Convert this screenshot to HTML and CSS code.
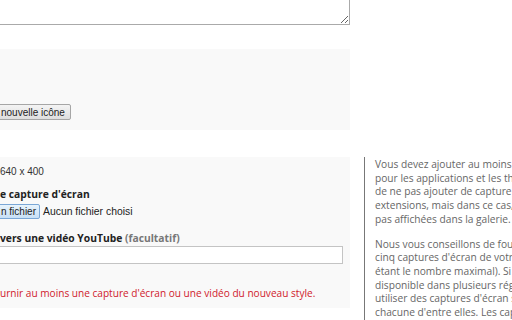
FILE: index.html
```html
<!DOCTYPE html>
<html lang="fr">
<head>
    <meta charset="UTF-8">
    <title>Ressources graphiques</title>
    <link rel="stylesheet" href="styles.css">
</head>
<body>
    <div class="form-row">
        <textarea class="desc"></textarea>
    </div>

    <div class="form-row">
        <div class="panel icon-panel">
            <button class="btn" type="button">nouvelle icône</button>
        </div>
    </div>

    <div class="form-row">
        <div class="panel shots">
            <p class="hint">640 x 400</p>
            <h4 class="label">e capture d'écran</h4>
            <div class="file-row">
                <span class="btn btn-file">n fichier</span>
                <span class="file-name">Aucun fichier choisi</span>
            </div>
            <h4 class="label label-video">vers une vidéo YouTube <span class="opt">(facultatif)</span></h4>
            <input class="url" type="text">
            <p class="error">urnir au moins une capture d'écran ou une vidéo du nouveau style.</p>
        </div>
        <div class="side">
            <p>Vous devez ajouter au moins une capture d'écran<br>
            pour les applications et les thèmes. Vous pouvez choisir<br>
            de ne pas ajouter de capture d'écran pour les<br>
            extensions, mais dans ce cas, elles ne seront<br>
            pas affichées dans la galerie.</p>
            <p>Nous vous conseillons de fournir au moins une, et de préférence<br>
            cinq captures d'écran de votre élément (cinq<br>
            étant le nombre maximal). Si votre élément est<br>
            disponible dans plusieurs régions, vous pouvez<br>
            utiliser des captures d'écran spécifiques pour<br>
            chacune d'entre elles. Les captures d'écran</p>
        </div>
    </div>
</body>
</html>
```

FILE: styles.css
```css
body { margin: 0; width: 512px; height: 320px; overflow: hidden; font-family: "Open Sans", sans-serif; font-size: 10px; color: #333; }
.form-row { display: flex; align-items: flex-start; }

.desc { display: block; box-sizing: border-box; margin: -40px 0 0 -10px; width: 360px; height: 65px; border: 1px solid #aaa; resize: both; }

.panel { flex-shrink: 0; background: #f9f9f9; width: 350px; box-sizing: border-box; }
.icon-panel { margin-top: 24px; height: 81px; padding-top: 55px; }

.btn { display: inline-block; box-sizing: border-box; font-family: "Liberation Sans", Arial, sans-serif; font-size: 10px; line-height: 13px; color: #222; border: 1px solid #a6a6a6; border-radius: 2px; background: linear-gradient(#f4f4f4, #dedede); padding: 1px 5px; margin: 0; }
.icon-panel .btn { height: 16px; margin-left: -5px; padding: 0 5px 0 5px; }

.shots { margin-top: 27px; height: 151px; padding-top: 8px; }
.hint { margin: 0; font-family: "Liberation Sans", Arial, sans-serif; font-size: 10px; line-height: 14px; color: #333; }
.label { margin: 8px 0 0; font-size: 10.3px; line-height: 14px; font-weight: bold; color: #222; }
.label-video { margin-top: 12px; }
.opt { color: #777; }

.file-row { display: flex; align-items: center; margin-top: 3px; height: 15px; }
.btn-file { height: 15px; line-height: 13px; margin-left: -6px; padding: 0 3px 0 6px; border-color: #7aa7d6; background: linear-gradient(#e8f3fc, #c7e0f6); }
.file-name { margin-left: 3px; font-family: "Liberation Sans", Arial, sans-serif; font-size: 10.4px; color: #222; }

.url { display: block; box-sizing: border-box; margin: 1px 0 0 -10px; width: 353px; height: 18px; border: 1px solid #c4c4c4; background: #fff; }
.error { margin: 22px 0 0; font-size: 10.1px; line-height: 14px; color: #d0202c; }

.side { margin-left: 14px; border-left: 1px solid #777; padding-left: 10px; margin-top: 27px; height: 200px; white-space: nowrap; font-size: 10.2px; color: #666; }
.side p { margin: 0 0 11px; line-height: 13.7px; }
.side p:first-child { margin-top: 1px; }
```
